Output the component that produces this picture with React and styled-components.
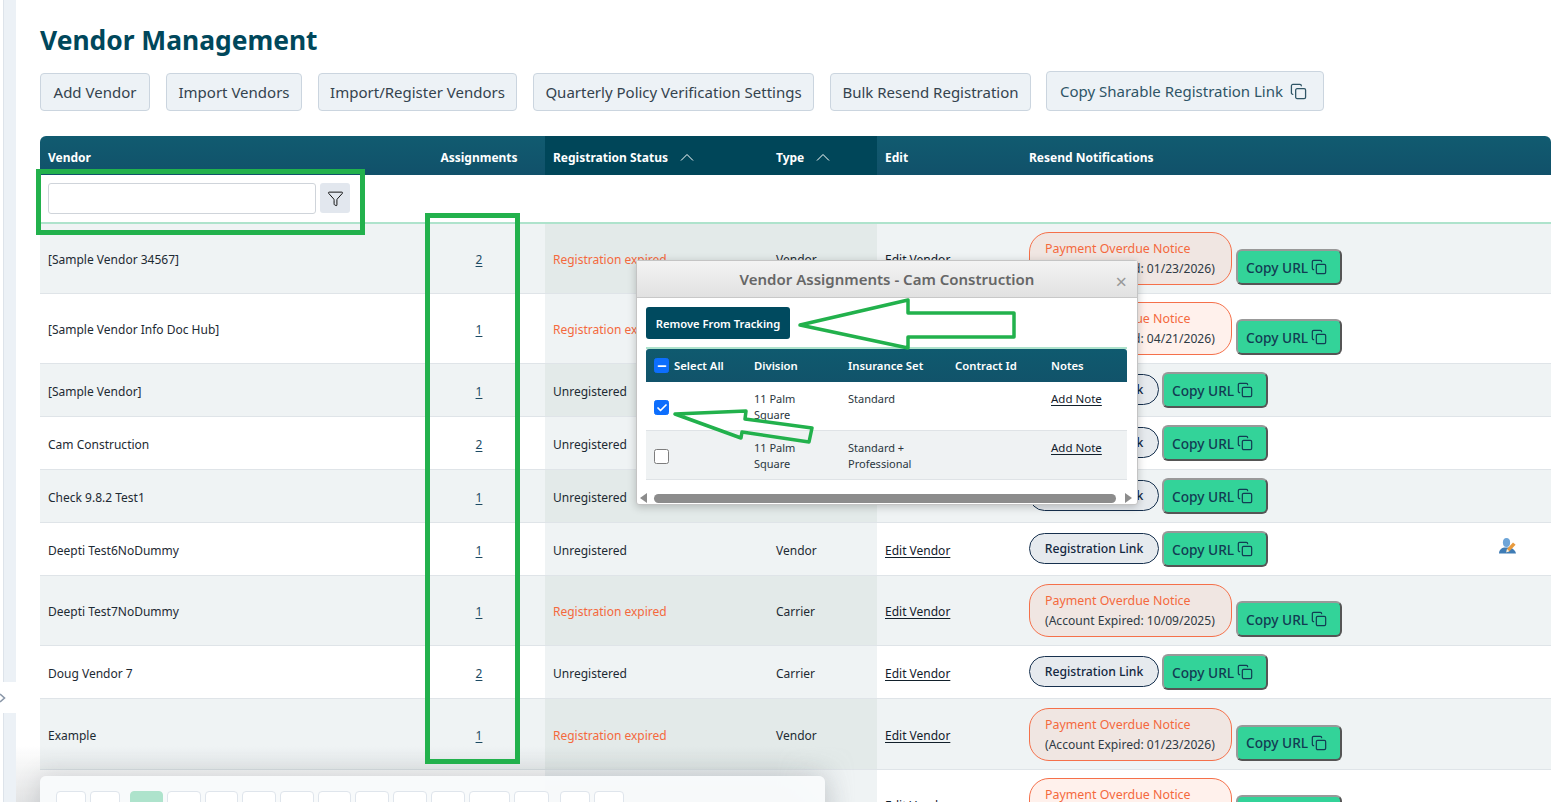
import React from "react";
import styled, { createGlobalStyle } from "styled-components";
import { Copy, Funnel, Minus, Check } from "lucide-react";

const Global = createGlobalStyle`
  html, body { margin: 0; padding: 0; background: #fff; }
  body { font-family: "Noto Sans", "Open Sans", sans-serif; color: #1d2a33; }
  * { box-sizing: border-box; }
`;

const Page = styled.div`
  position: relative;
  display: flex;
  width: 1551px;
  height: 802px;
  overflow: hidden;
  background: #fff;
`;
const SideStrip = styled.div`
  flex: 0 0 13px;
  margin-left: 3px;
  background: #ecf1f6;
  border-left: 1px solid #dde3ea;
`;
const SideTab = styled.div`
  position: absolute;
  left: 0;
  top: 682px;
  width: 18px;
  height: 31px;
  background: #fff;
  display: flex;
  align-items: center;
  color: #8a97a8;
`;
const Main = styled.main`
  flex: 1;
  min-width: 0;
  padding: 24px 0 0 24px;
`;
const Title = styled.h1`
  margin: 0;
  height: 35px;
  font-size: 26.4px;
  line-height: 33px;
  font-weight: 700;
  color: #00475b;
`;
const Toolbar = styled.div`
  display: flex;
  align-items: center;
  gap: 16px;
  margin-top: 12px;
  height: 42px;
`;
const ToolButton = styled.button`
  flex: none;
  width: ${(p) => p.$w}px;
  height: 38px;
  padding: 0;
  display: inline-flex;
  align-items: center;
  justify-content: center;
  gap: 7px;
  font: 400 15px "Noto Sans", sans-serif;
  color: #34434e;
  background: #edf2f6;
  border: 1px solid #cbd5df;
  border-radius: 4px;
  white-space: nowrap;
`;
const ShareButton = styled(ToolButton)`
  height: 40px;
  margin-left: -1px;
  gap: 7px;
  padding-right: 3px;
  color: #2f5566;
  transform: translateY(-1px);
`;
const Table = styled.table`
  margin-top: 23px;
  width: 1511px;
  table-layout: fixed;
  border-collapse: separate;
  border-spacing: 0;
  font-size: 12px;
`;
const Th = styled.th`
  height: 39px;
  padding: 3px 8px 0;
  text-align: ${(p) => (p.$center ? "center" : "left")};
  font-size: 12px;
  font-weight: 700;
  color: #fff;
  white-space: nowrap;
  background: ${(p) => (p.$sorted ? "#004659" : "linear-gradient(#115b70, #11516a)")};
  &:first-child { border-top-left-radius: 6px; }
  &:last-child { border-top-right-radius: 6px; }
`;
const SortIcon = styled.svg`
  width: 14px;
  height: 8px;
  margin-left: 12px;
  vertical-align: 1px;
  & path { fill: none; stroke: #fff; stroke-width: 1; }
`;
const TypeLabel = styled.span`
  padding-left: 1px;
`;
const FilterCell = styled.td`
  height: 48px;
  padding: 8px;
  vertical-align: top;
  border-bottom: 2px solid #aee3cc;
`;
const FilterWrap = styled.div`
  display: flex;
  gap: 4px;
`;
const FilterInput = styled.input`
  width: 268px;
  height: 31px;
  background: #fff;
  border: 1px solid #cfd4da;
  border-radius: 3px;
`;
const FilterButton = styled.button`
  width: 30px;
  height: 30px;
  padding: 0;
  display: flex;
  align-items: center;
  justify-content: center;
  background: #e2e7ee;
  border: 0;
  border-radius: 3px;
  color: #111;
`;
const Row = styled.tr`
  height: ${(p) => p.$h}px;
`;
const Td = styled.td`
  padding: 2px 8px 0;
  vertical-align: middle;
  text-align: ${(p) => (p.$center ? "center" : "left")};
  color: ${(p) => (p.$alert ? "#f4693d" : "#1d2a33")};
  border-bottom: 1px solid #dfe4e8;
  white-space: nowrap;
  background: ${(p) =>
    p.$shade ? (p.$odd ? "#e3eae9" : "#eff3f4") : p.$odd ? "#eff3f4" : "#fff"};
`;
const IconCell = styled(Td)`
  padding: 0 0 3px 19px;
`;
const TextLink = styled.a`
  color: #12202b;
  text-decoration: underline;
  text-underline-offset: 2px;
`;
const NumberLink = styled(TextLink)`
  color: #1c4a63;
`;
const NoteLink = styled(TextLink)`
  font-size: 11.5px;
`;
const Actions = styled.div`
  display: flex;
  align-items: flex-end;
  gap: ${(p) => (p.$notice ? 4 : 3)}px;
  margin-top: -2px;
`;
const NoticePill = styled.div`
  width: 203px;
  height: 53px;
  padding: 6px 0 0 15px;
  border: 1px solid #f5704a;
  border-radius: 20px;
  background: rgba(250, 90, 40, 0.085);
  font-size: 12.1px;
  line-height: 20px;
  color: #2e3a44;
`;
const NoticeTitle = styled.div`
  color: #f4693d;
  font-size: 12.4px;
`;
const LinkPill = styled.button`
  width: 130px;
  height: 31px;
  align-self: center;
  margin-bottom: 1px;
  padding: 0;
  font: 500 12.2px "Noto Sans", sans-serif;
  color: #13283f;
  background: #e6eaee;
  border: 1px solid #16304e;
  border-radius: 16px;
`;
const CopyButton = styled.button`
  width: 106px;
  height: 36px;
  display: inline-flex;
  align-items: center;
  gap: 3px;
  padding: 0 0 0 8px;
  font: 500 13.7px "Noto Sans", sans-serif;
  color: #123c53;
  background: #33d399;
  border-width: 2px;
  border-style: solid;
  border-color: #999 #555 #555 #999;
  border-radius: 6px;
`;

const Highlight = styled.div`
  position: absolute;
  border: 5px solid #22b14c;
  pointer-events: none;
`;
const FilterHighlight = styled(Highlight)`
  left: 36px;
  top: 169px;
  width: 329px;
  height: 66px;
`;
const AssignHighlight = styled(Highlight)`
  left: 425px;
  top: 213px;
  width: 95px;
  height: 551px;
`;

const Modal = styled.section`
  position: absolute;
  left: 636px;
  top: 260px;
  width: 502px;
  height: 245px;
  background: #fff;
  border: 1px solid #c4c4c4;
  border-radius: 3px;
  box-shadow: 0 2px 8px rgba(0, 0, 0, 0.22);
  display: flex;
  flex-direction: column;
`;
const ModalHead = styled.header`
  position: relative;
  flex: 0 0 37px;
  display: flex;
  align-items: center;
  justify-content: center;
  background: linear-gradient(#f3f3f3, #e1e1e1);
  border-bottom: 1px solid #c8c8c8;
  font-size: 15px;
  font-weight: 600;
  color: #666;
`;
const ModalClose = styled.span`
  position: absolute;
  right: 10px;
  top: 11px;
  font-size: 20px;
  font-weight: 400;
  line-height: 20px;
  color: #999;
`;
const ModalBody = styled.div`
  flex: 1;
  padding: 9px 9px 0;
`;
const RemoveButton = styled.button`
  display: block;
  width: 144px;
  height: 32px;
  padding: 0;
  font: 600 11.2px "Noto Sans", sans-serif;
  color: #fff;
  background: #004a5f;
  border: 0;
  border-radius: 3px;
`;
const MiniTable = styled.table`
  margin-top: 8px;
  width: 481px;
  table-layout: fixed;
  border-collapse: separate;
  border-spacing: 0;
  border-top: 2px solid #aee3cc;
  font-size: 11px;
`;
const MiniTh = styled.th`
  height: 33px;
  padding: 0 8px;
  text-align: left;
  font-size: 11.3px;
  font-weight: 600;
  color: #fff;
  white-space: nowrap;
  background: linear-gradient(#0f5a6f, #11536a);
  &:first-child { border-top-left-radius: 3px; }
  &:last-child { border-top-right-radius: 3px; }
`;
const MiniTd = styled.td`
  height: 49px;
  padding: 9px 8px 0;
  vertical-align: top;
  line-height: 16px;
  color: #2a3640;
  background: ${(p) => (p.$odd ? "#eff2f3" : "#fff")};
  border-bottom: 1px solid #dfe3e6;
`;
const CheckCell = styled(MiniTd)`
  vertical-align: middle;
  padding: 6px 8px 0;
`;
const HeadCheckWrap = styled.span`
  display: flex;
  align-items: center;
  gap: 5px;
`;
const CheckBox = styled.span`
  width: 15px;
  height: 15px;
  display: inline-flex;
  align-items: center;
  justify-content: center;
  color: #fff;
  border-radius: 2.5px;
  background: ${(p) => (p.$on ? "#0d6efd" : "#fff")};
  border: 1px solid ${(p) => (p.$on ? "#0d6efd" : "#7d7d7d")};
`;
const ScrollBar = styled.div`
  margin-top: 12px;
  height: 12px;
  display: flex;
  align-items: center;
  gap: 7px;
  margin-left: -6px;
  margin-right: -4px;
`;
const ScrollArrow = styled.span`
  width: 0;
  height: 0;
  border-top: 5px solid transparent;
  border-bottom: 5px solid transparent;
  ${(p) =>
    p.$right
      ? "border-left: 7px solid #8c8c8c;"
      : "border-right: 7px solid #8c8c8c;"}
`;
const ScrollThumb = styled.span`
  flex: 1;
  height: 9px;
  background: #8c8c8c;
  border-radius: 5px;
  margin-right: 2px;
`;

const BottomFade = styled.div`
  position: absolute;
  left: 16px;
  right: 0;
  bottom: 0;
  height: 57px;
  pointer-events: none;
  background: linear-gradient(rgba(120, 125, 130, 0), rgba(120, 125, 130, 0.2));
  mask-image: linear-gradient(90deg, #000 0, #000 760px, transparent 840px);
`;
const Pager = styled.nav`
  position: absolute;
  left: 40px;
  top: 776px;
  width: 785px;
  height: 60px;
  padding: 15px 0 0 16px;
  display: flex;
  align-items: flex-start;
  background: rgba(248, 250, 251, 0.97);
  border-radius: 6px;
  box-shadow: 0 0 24px rgba(60, 70, 80, 0.2);
`;
const PageGroup = styled.div`
  display: flex;
  gap: 4px;
  margin-right: ${(p) => p.$gap}px;
`;
const PageButton = styled.span`
  display: block;
  width: ${(p) => p.$w}px;
  height: 30px;
  background: ${(p) => (p.$on ? "#aee3cc" : "#fff")};
  border: 1px solid ${(p) => (p.$on ? "#aee3cc" : "#dfe5ec")};
  border-radius: 4px;
`;
const ArrowLayer = styled.svg`
  position: absolute;
  left: 0;
  top: 0;
  width: 1551px;
  height: 802px;
  pointer-events: none;
  & polygon {
    fill: none;
    stroke: #22b14c;
    stroke-width: 3.5;
    stroke-linejoin: round;
  }
`;

const UserEditIcon = () => (
  <svg width="18" height="16" viewBox="0 0 18 16" aria-hidden="true">
    <ellipse cx="7.5" cy="4.5" rx="3.6" ry="4.5" fill="#6ea5d8" />
    <path d="M0 15.5c0-4 3-5.5 5-6h5c3 .5 6 2 7 6z" fill="#3f7cb5" />
    <path d="M8 11l6-6.5 2.6 2.2-6.2 6.5-3 .8z" fill="#e89a3c" />
    <path d="M8 11l-.8 3.4 3.2-1.1z" fill="#f4f0e4" />
  </svg>
);

const cols = [373, 132, 222, 110, 144, 459, 71];

const rows = [
  { name: "[Sample Vendor 34567]", n: 2, status: "Registration expired", type: "Vendor", date: "01/23/2026", h: 70 },
  { name: "[Sample Vendor Info Doc Hub]", n: 1, status: "Registration expired", type: "Vendor", date: "04/21/2026", h: 70 },
  { name: "[Sample Vendor]", n: 1, status: "Unregistered", type: "Vendor", h: 53 },
  { name: "Cam Construction", n: 2, status: "Unregistered", type: "Vendor", h: 53 },
  { name: "Check 9.8.2 Test1", n: 1, status: "Unregistered", type: "Vendor", h: 53 },
  { name: "Deepti Test6NoDummy", n: 1, status: "Unregistered", type: "Vendor", h: 53, editor: true },
  { name: "Deepti Test7NoDummy", n: 1, status: "Registration expired", type: "Carrier", date: "10/09/2025", h: 70 },
  { name: "Doug Vendor 7", n: 2, status: "Unregistered", type: "Carrier", h: 53 },
  { name: "Example", n: 1, status: "Registration expired", type: "Vendor", date: "01/23/2026", h: 71 },
  { name: "", n: null, status: "", type: "", date: "01/23/2026", h: 70 },
];

const pagesLead = [30, 30];
const pages = [33, 33.7, 33.7, 33.7, 33.7, 33.7, 33.7, 33.7, 33.7, 41, 35];
const pagesTail = [30, 30];

function CopyUrl() {
  return (
    <CopyButton>
      Copy URL <Copy size={16} strokeWidth={1.8} />
    </CopyButton>
  );
}

const Chevron = () => (
  <SortIcon viewBox="0 0 14 8" aria-hidden="true">
    <path d="M1 7.5L7 1.5l6 6" />
  </SortIcon>
);

export default function App() {
  return (
    <Page>
      <Global />
      <SideStrip />
      <Main>
        <Title>Vendor Management</Title>
        <Toolbar>
          <ToolButton $w={110}>Add Vendor</ToolButton>
          <ToolButton $w={136}>Import Vendors</ToolButton>
          <ToolButton $w={199}>Import/Register Vendors</ToolButton>
          <ToolButton $w={281}>Quarterly Policy Verification Settings</ToolButton>
          <ToolButton $w={201}>Bulk Resend Registration</ToolButton>
          <ShareButton $w={278}>
            Copy Sharable Registration Link <Copy size={17} strokeWidth={1.8} />
          </ShareButton>
        </Toolbar>
        <Table>
          <colgroup>
            {cols.map((w, i) => (
              <col key={i} style={{ width: w }} />
            ))}
          </colgroup>
          <thead>
            <tr>
              <Th>Vendor</Th>
              <Th $center>Assignments</Th>
              <Th $sorted>
                Registration Status
                <Chevron />
              </Th>
              <Th $sorted>
                <TypeLabel>Type</TypeLabel>
                <Chevron />
              </Th>
              <Th>Edit</Th>
              <Th>Resend Notifications</Th>
              <Th />
            </tr>
            <tr>
              <FilterCell colSpan={7}>
                <FilterWrap>
                  <FilterInput aria-label="Vendor filter" />
                  <FilterButton aria-label="Filter">
                    <Funnel size={17} strokeWidth={1.4} />
                  </FilterButton>
                </FilterWrap>
              </FilterCell>
            </tr>
          </thead>
          <tbody>
            {rows.map((r, i) => {
              const odd = i % 2 === 0;
              return (
                <Row key={i} $h={r.h}>
                  <Td $odd={odd}>{r.name}</Td>
                  <Td $odd={odd} $center>
                    {r.n !== null && <NumberLink href="#">{r.n}</NumberLink>}
                  </Td>
                  <Td $odd={odd} $shade $alert={r.status === "Registration expired"}>
                    {r.status}
                  </Td>
                  <Td $odd={odd} $shade>
                    <TypeLabel>{r.type}</TypeLabel>
                  </Td>
                  <Td $odd={odd}>
                    <TextLink href="#">Edit Vendor</TextLink>
                  </Td>
                  <Td $odd={odd}>
                    {r.date ? (
                      <Actions $notice>
                        <NoticePill>
                          <NoticeTitle>Payment Overdue Notice</NoticeTitle>
                          (Account Expired: {r.date})
                        </NoticePill>
                        <CopyUrl />
                      </Actions>
                    ) : (
                      <Actions>
                        <LinkPill>Registration Link</LinkPill>
                        <CopyUrl />
                      </Actions>
                    )}
                  </Td>
                  <IconCell $odd={odd}>
                    {r.editor && <UserEditIcon />}
                  </IconCell>
                </Row>
              );
            })}
          </tbody>
        </Table>
      </Main>

      <SideTab>
        <svg width="6" height="12" viewBox="0 0 6 12" aria-hidden="true">
          <path d="M0 2l4.5 4L0 10" fill="none" stroke="currentColor" strokeWidth="1.6" />
        </svg>
      </SideTab>

      <BottomFade />
      <Pager>
        <PageGroup $gap={10}>
          {pagesLead.map((w, i) => (
            <PageButton key={i} $w={w} />
          ))}
        </PageGroup>
        <PageGroup $gap={11}>
          {pages.map((w, i) => (
            <PageButton key={i} $w={w} $on={i === 0} />
          ))}
        </PageGroup>
        <PageGroup $gap={0}>
          {pagesTail.map((w, i) => (
            <PageButton key={i} $w={w} />
          ))}
        </PageGroup>
      </Pager>

      <FilterHighlight />
      <AssignHighlight />

      <Modal>
        <ModalHead>
          Vendor Assignments - Cam Construction
          <ModalClose>×</ModalClose>
        </ModalHead>
        <ModalBody>
          <RemoveButton>Remove From Tracking</RemoveButton>
          <MiniTable>
            <colgroup>
              <col style={{ width: 100 }} />
              <col style={{ width: 94 }} />
              <col style={{ width: 107 }} />
              <col style={{ width: 96 }} />
              <col style={{ width: 84 }} />
            </colgroup>
            <thead>
              <tr>
                <MiniTh>
                  <HeadCheckWrap>
                    <CheckBox $on>
                      <Minus size={12} strokeWidth={3.5} />
                    </CheckBox>
                    Select All
                  </HeadCheckWrap>
                </MiniTh>
                <MiniTh>Division</MiniTh>
                <MiniTh>Insurance Set</MiniTh>
                <MiniTh>Contract Id</MiniTh>
                <MiniTh>Notes</MiniTh>
              </tr>
            </thead>
            <tbody>
              <tr>
                <CheckCell>
                  <CheckBox $on>
                    <Check size={12} strokeWidth={3.5} />
                  </CheckBox>
                </CheckCell>
                <MiniTd>11 Palm Square</MiniTd>
                <MiniTd>Standard</MiniTd>
                <MiniTd />
                <MiniTd>
                  <NoteLink href="#">Add Note</NoteLink>
                </MiniTd>
              </tr>
              <tr>
                <CheckCell $odd>
                  <CheckBox />
                </CheckCell>
                <MiniTd $odd>11 Palm Square</MiniTd>
                <MiniTd $odd>Standard + Professional</MiniTd>
                <MiniTd $odd />
                <MiniTd $odd>
                  <NoteLink href="#">Add Note</NoteLink>
                </MiniTd>
              </tr>
            </tbody>
          </MiniTable>
          <ScrollBar>
            <ScrollArrow />
            <ScrollThumb />
            <ScrollArrow $right />
          </ScrollBar>
        </ModalBody>
      </Modal>

      <ArrowLayer viewBox="0 0 1551 802" aria-hidden="true">
        <polygon points="800,325 908,300 908,313 1014,313 1014,337 908,337 908,348" />
        <polygon points="675,414 746,411 745,419 812,428 809,442 742,432 741,438" />
      </ArrowLayer>
    </Page>
  );
}
